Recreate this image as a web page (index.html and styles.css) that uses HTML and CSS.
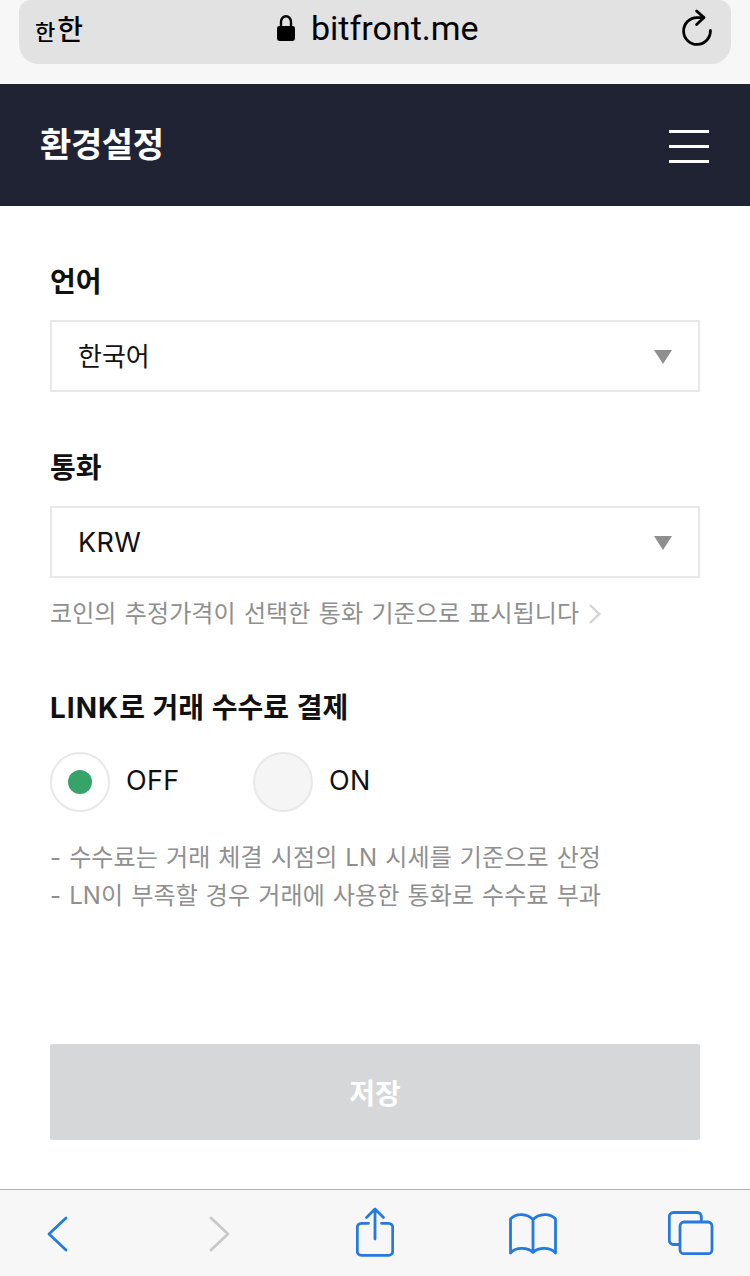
FILE: index.html
```html
<!DOCTYPE html>
<html lang="ko">
<head>
  <meta charset="UTF-8" />
  <meta name="viewport" content="width=device-width, initial-scale=1.0"/>
  <title>환경설정</title>
  <link rel="stylesheet" href="styles.css">
</head>
<body>
  <!-- Browser address bar -->
  <div class="browser-bar">
    <div class="address">
      <div class="text-size"><span class="small">한</span><span class="big">한</span></div>
      <div class="url">
        <svg class="lock" width="18" height="26" viewBox="0 0 18 26">
          <path d="M4 12V6.8a5 5.6 0 0 1 10 0V12" fill="none" stroke="#000" stroke-width="2.4"/>
          <rect x="0" y="11" width="18" height="15" rx="2.4"/>
        </svg>
        <span>bitfront.me</span>
      </div>
      <svg class="reload" width="32" height="38" viewBox="0 0 32 38" fill="none" stroke="#000" stroke-width="2.8" stroke-linecap="round" stroke-linejoin="round">
        <path d="M29.4 21.5A13.4 13.4 0 1 1 16 8.6h6.500"/>
        <path d="M15.600 2l7.400 6.600-7.400 7"/>
      </svg>
    </div>
  </div>

  <header class="header">
    <h1>환경설정</h1>
    <button class="menu" aria-label="menu">
      <span></span>
      <span></span>
      <span></span>
    </button>
  </header>

  <main class="settings">
    <h2>언어</h2>
    <div class="select">
      <span class="value">한국어</span>
      <span class="arrow"></span>
    </div>

    <h2 class="currency">통화</h2>
    <div class="select">
      <span class="value latin">KRW</span>
      <span class="arrow"></span>
    </div>
    <p class="hint">
      <span>코인의 추정가격이 선택한 통화 기준으로 표시됩니다</span>
      <svg width="12" height="20" viewBox="0 0 12 20" fill="none" stroke="#d4d4d4" stroke-width="2.4">
        <path d="M1 1l9.3 9L1 19"/>
      </svg>
    </p>

    <h2 class="fee"><span class="link">LINK</span>로 거래 수수료 결제</h2>
    <div class="radios">
      <div class="radio checked"><span class="circle"></span><span class="name">OFF</span></div>
      <div class="radio"><span class="circle"></span><span class="name">ON</span></div>
    </div>
    <ul class="notes">
      <li>- 수수료는 거래 체결 시점의 LN 시세를 기준으로 산정</li>
      <li>- LN이 부족할 경우 거래에 사용한 통화로 수수료 부과</li>
    </ul>

    <button class="save">저장</button>
  </main>

  <!-- Browser toolbar -->
  <nav class="toolbar">
    <svg width="22" height="38" viewBox="0 0 22 38">
      <path d="M19 3L2 19l17 16"/>
    </svg>
    <svg class="forward" width="22" height="38" viewBox="0 0 22 38">
      <path d="M3 3l17 16L3 35"/>
    </svg>
    <svg class="share" width="38" height="50" viewBox="0 0 38 50">
      <path d="M12.5 16.3H5.3a4 4 0 0 0-4 4v24a4 4 0 0 0 4 4h27.4a4 4 0 0 0 4-4v-24a4 4 0 0 0-4-4h-7.2"/>
      <path d="M19 32V2.5M10.5 10.5L19 2l8.5 8.5"/>
    </svg>
    <svg class="book" width="48" height="42" viewBox="0 0 48 42">
      <path d="M24 6.5C18.5.5 7-.5 1.5 6v34C7 34 18.5 34 24 39.5 29.5 34 41 34 46.5 40V6C41-.5 29.5.5 24 6.5zV39.5"/>
    </svg>
    <svg class="tabs" width="46" height="44" viewBox="0 0 46 44">
      <path d="M11 33.5H5.3a4 4 0 0 1-4-4v-24a4 4 0 0 1 4-4h24a4 4 0 0 1 4 4v5"/>
      <rect x="12" y="11" width="32" height="31.7" rx="4"/>
    </svg>
  </nav>
</body>
</html>
```
FILE: styles.css
```css
* {
  box-sizing: border-box;
}
body {
  margin: 0;
  font-family: Inter, "Noto Sans CJK KR", sans-serif;
  background-color: #fff;
  color: #111;
}
h1, h2, p, ul {
  margin: 0;
  padding: 0;
}
button {
  border: none;
  padding: 0;
  font-family: inherit;
}
svg {
  display: block;
  flex: none;
}

/* address bar */
.browser-bar {
  height: 84px;
  padding: 0 19px;
  background-color: #f7f7f7;
}
.address {
  display: flex;
  justify-content: space-between;
  height: 64px;
  padding: 0 18px 0 16px;
  background-color: #e2e2e2;
  border-radius: 12px 12px 20px 20px;
  color: #000;
}
.text-size {
  width: 242px;
  font-weight: 500;
  line-height: 61px;
  white-space: nowrap;
}
.text-size .small {
  font-size: 22px;
}
.text-size .big {
  margin-left: 2px;
  font-size: 28px;
}
.url {
  display: flex;
  flex: 1;
  gap: 16px;
  font-family: Roboto, sans-serif;
  font-size: 34px;
  line-height: 57px;
}
.lock {
  margin-top: 15px;
}
.reload {
  margin-top: 9px;
}

/* page header */
.header {
  display: flex;
  justify-content: space-between;
  height: 122px;
  padding: 0 41px 0 40px;
  background-color: #202333;
}
.header h1 {
  font-size: 34px;
  font-weight: 700;
  line-height: 122px;
  letter-spacing: -0.4px;
  color: #fff;
}
.menu {
  display: flex;
  flex-direction: column;
  gap: 12px;
  width: 40px;
  margin-top: 46px;
  background: none;
}
.menu span {
  width: 40px;
  height: 3px;
  background-color: #fff;
}

/* settings form */
.settings {
  height: 983px;
  padding: 56px 50px 0;
}
.settings h2 {
  margin-bottom: 18px;
  font-size: 28px;
  font-weight: 700;
  line-height: 40px;
}
.settings .currency {
  margin-top: 56px;
}
.settings .fee {
  margin-top: 56px;
  margin-bottom: 24px;
  word-spacing: 1px;
}
.link {
  letter-spacing: 1px;
}
.select {
  display: flex;
  justify-content: space-between;
  align-items: center;
  height: 72px;
  padding: 0 26px;
  border: 2px solid #e8e8e8;
}
.value {
  font-size: 26px;
  line-height: 68px;
  padding-top: 2px;
}
.latin {
  font-size: 27px;
  letter-spacing: 0.4px;
}
.arrow {
  margin-top: 1px;
  border: 9px solid transparent;
  border-top: 14px solid #8f8f8f;
  border-bottom: none;
}
.hint {
  display: flex;
  align-items: center;
  gap: 10px;
  margin-top: 18px;
  font-size: 24px;
  line-height: 36px;
  letter-spacing: 0.08px;
  word-spacing: 1.5px;
  color: #8f8f8f;
}
.radios {
  display: flex;
  height: 60px;
}
.radio {
  display: flex;
  gap: 16px;
  width: 203px;
}
.circle {
  display: flex;
  justify-content: center;
  align-items: center;
  width: 60px;
  height: 60px;
  background-color: #f5f5f5;
  border: 2px solid #e8e8e8;
  border-radius: 50%;
}
.checked .circle {
  background-color: #fff;
}
.checked .circle::after {
  content: "";
  width: 24px;
  height: 24px;
  background-color: #36a468;
  border-radius: 50%;
}
.name {
  font-size: 27px;
  line-height: 57px;
  letter-spacing: 0.3px;
}
.notes {
  margin-top: 27px;
  list-style: none;
  font-size: 24px;
  line-height: 38px;
  letter-spacing: 0.1px;
  word-spacing: 1.2px;
  white-space: nowrap;
  color: #8f8f8f;
}
.save {
  display: block;
  width: 100%;
  height: 96px;
  margin-top: 129px;
  background-color: #d6d7d9;
  border-radius: 2px;
  color: #fff;
  font-size: 28px;
  font-weight: 700;
}

/* bottom toolbar */
.toolbar {
  display: flex;
  height: 87px;
  padding: 25px 0 0 47px;
  background-color: #f7f7f7;
  border-top: 1px solid #aeaeae;
}
.toolbar svg {
  fill: none;
  stroke: #247adf;
  stroke-width: 2.8;
  stroke-linecap: round;
  stroke-linejoin: round;
}
.toolbar .forward {
  margin-left: 139px;
  stroke: #c9c9c9;
}
.toolbar .share {
  margin-top: -8px;
  margin-left: 126px;
}
.toolbar .book {
  margin-top: -2px;
  margin-left: 115px;
}
.toolbar .tabs {
  margin-top: -4px;
  margin-left: 111px;
}
```
